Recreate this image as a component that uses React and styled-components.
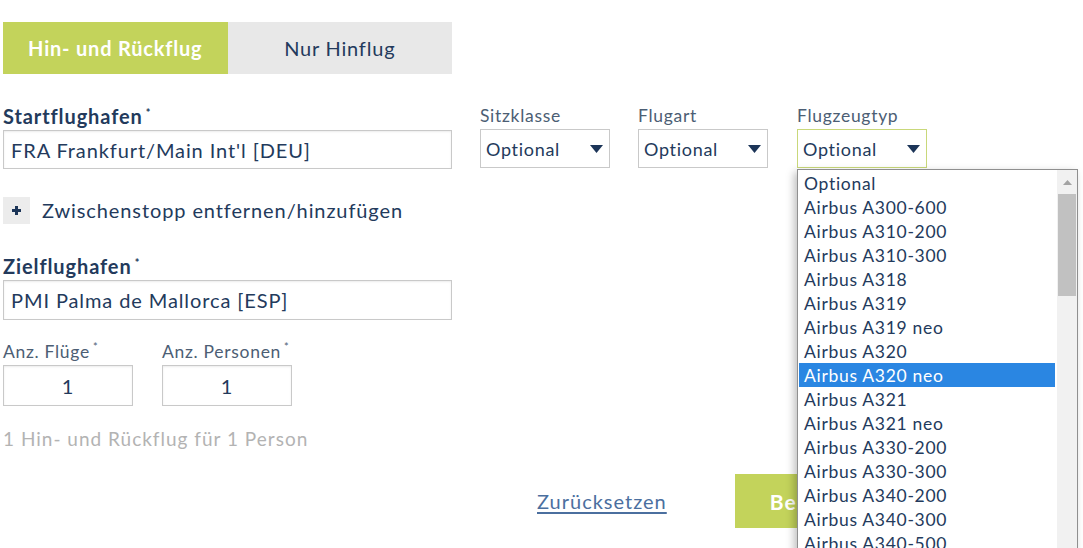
import React from "react";
import styled, { createGlobalStyle } from "styled-components";

const colors = {
  navy: "#233a5c",
  label: "#4c5e74",
  green: "#c3d35b",
  grey: "#e8e8e8",
  border: "#c9c9c9",
  muted: "#b3b3b3",
  link: "#4b6f9f",
  highlight: "#2a86e2",
};

const aircraft = [
  "Optional",
  "Airbus A300-600",
  "Airbus A310-200",
  "Airbus A310-300",
  "Airbus A318",
  "Airbus A319",
  "Airbus A319 neo",
  "Airbus A320",
  "Airbus A320 neo",
  "Airbus A321",
  "Airbus A321 neo",
  "Airbus A330-200",
  "Airbus A330-300",
  "Airbus A340-200",
  "Airbus A340-300",
  "Airbus A340-500",
  "Airbus A340-600",
];

const GlobalStyle = createGlobalStyle`
  html, body {
    margin: 0;
    background: #fff;
    overflow: hidden;
  }
  body {
    font-family: Lato, "Open Sans", sans-serif;
    color: ${colors.navy};
  }
`;

const Page = styled.div`
  padding: 22px 0 0 3px;
  width: 1080px;
  height: 548px;
  box-sizing: border-box;
`;

const Toggle = styled.div`
  display: flex;
  width: 449px;
  height: 52px;
`;

const ToggleOption = styled.div`
  flex: 1;
  display: flex;
  align-items: center;
  justify-content: center;
  font-size: 20px;
  letter-spacing: 0.8px;
  font-weight: ${(p) => (p.active ? 700 : 400)};
  background: ${(p) => (p.active ? colors.green : colors.grey)};
  color: ${(p) => (p.active ? "#fff" : colors.navy)};
`;

const Row = styled.div`
  display: flex;
  align-items: flex-start;
  gap: ${(p) => p.gap || 28}px;
  margin-top: ${(p) => p.top || 0}px;
`;

const Field = styled.div`
  position: relative;
  display: flex;
  flex-direction: column;
  width: ${(p) => p.width}px;
`;

const Label = styled.div`
  font-size: ${(p) => (p.small ? 17.5 : 20)}px;
  letter-spacing: ${(p) => (p.small ? 0.7 : 0.9)}px;
  font-weight: ${(p) => (p.strong ? 700 : 400)};
  color: ${(p) => (p.small ? colors.label : colors.navy)};
  line-height: 20px;
  height: 20px;
  margin-bottom: ${(p) => (p.small ? 3 : 4)}px;
  white-space: nowrap;
`;

const Star = styled.sup`
  font-size: 11px;
  margin-left: 3px;
  vertical-align: 7px;
  line-height: 0;
`;

const TextBox = styled.div`
  height: ${(p) => p.height || 39}px;
  box-sizing: border-box;
  border: 1px solid ${colors.border};
  box-shadow: inset 0 1px 2px rgba(0, 0, 0, 0.08);
  display: flex;
  align-items: center;
  justify-content: ${(p) => (p.center ? "center" : "flex-start")};
  padding: 0 7px;
  font-size: 20px;
  letter-spacing: 0.9px;
  color: ${colors.navy};
  background: #fff;
  white-space: nowrap;
`;

const SelectBox = styled.div`
  height: 39px;
  box-sizing: border-box;
  border: 1px solid ${(p) => (p.open ? "#c9d87a" : colors.border)};
  display: flex;
  align-items: center;
  justify-content: space-between;
  padding: 0 6px 0 5px;
  font-size: 18px;
  letter-spacing: 0.7px;
  color: ${colors.navy};
  background: #fff;
`;

const Caret = () => (
  <svg width="13" height="8" viewBox="0 0 13 8">
    <path d="M0 0 H13 L6.5 8 Z" fill="#1c3558" />
  </svg>
);

const Dropdown = styled.ul`
  position: absolute;
  top: 63px;
  left: 0;
  width: 281px;
  height: 400px;
  margin: 0;
  padding: 1px 22px 0 1px;
  list-style: none;
  box-sizing: border-box;
  background: #fff;
  border: 1px solid #8f8f8f;
  box-shadow: -3px 3px 8px rgba(0, 0, 0, 0.25);
  z-index: 5;
  overflow: hidden;
`;

const Option = styled.li`
  height: 24px;
  line-height: 25px;
  padding-left: 5px;
  font-size: 17.5px;
  letter-spacing: 0.7px;
  white-space: nowrap;
  background: ${(p) => (p.selected ? colors.highlight : "transparent")};
  color: ${(p) => (p.selected ? "#fff" : colors.navy)};
`;

const Scrollbar = styled.div`
  position: absolute;
  top: 0;
  right: 0;
  width: 20px;
  height: 100%;
  background: #f1f1f1;
  display: flex;
  flex-direction: column;
  align-items: center;
`;

const ScrollArrow = styled.div`
  height: 24px;
  display: flex;
  align-items: center;
  justify-content: center;
`;

const Thumb = styled.div`
  width: 18px;
  height: 102px;
  background: #c1c1c1;
`;

const Stopover = styled.div`
  display: flex;
  align-items: center;
  gap: 12px;
  margin-top: 28px;
  font-size: 20px;
  letter-spacing: 0.9px;
  line-height: 27px;
  color: ${colors.navy};
`;

const PlusBox = styled.div`
  width: 27px;
  height: 27px;
  background: #ececec;
  display: flex;
  align-items: center;
  justify-content: center;
`;

const Summary = styled.div`
  margin-top: 23px;
  font-size: 19px;
  letter-spacing: 1px;
  line-height: 20px;
  color: ${colors.muted};
`;

const Actions = styled.div`
  display: flex;
  align-items: center;
  gap: 68px;
  margin-top: 25px;
  padding-left: 534px;
`;

const ResetLink = styled.a`
  font-size: 20px;
  letter-spacing: 1px;
  color: ${colors.link};
  text-decoration: underline;
  text-underline-offset: 3px;
`;

const SubmitButton = styled.button`
  width: 210px;
  height: 54px;
  border: none;
  background: ${colors.green};
  color: #fff;
  font-family: inherit;
  font-size: 21px;
  letter-spacing: 1px;
  font-weight: 700;
  text-align: left;
  padding-left: 35px;
`;

export default function App() {
  return (
    <>
      <GlobalStyle />
      <Page>
        <Toggle>
          <ToggleOption active>Hin- und Rückflug</ToggleOption>
          <ToggleOption>Nur Hinflug</ToggleOption>
        </Toggle>

        <Row top={32} gap={28}>
          <Field width={449}>
            <Label strong>
              Startflughafen<Star>*</Star>
            </Label>
            <TextBox>FRA Frankfurt/Main Int'l [DEU]</TextBox>
          </Field>
          <Row gap={28}>
            <Field width={130}>
              <Label small>Sitzklasse</Label>
              <SelectBox>
                Optional <Caret />
              </SelectBox>
            </Field>
            <Field width={130}>
              <Label small>Flugart</Label>
              <SelectBox>
                Optional <Caret />
              </SelectBox>
            </Field>
            <Field width={130} style={{ marginLeft: 1 }}>
              <Label small>Flugzeugtyp</Label>
              <SelectBox open>
                Optional <Caret />
              </SelectBox>
              <Dropdown>
                {aircraft.map((name, i) => (
                  <Option key={name} selected={i === 8}>
                    {name}
                  </Option>
                ))}
                <Scrollbar>
                  <ScrollArrow>
                    <svg width="9" height="5" viewBox="0 0 9 5">
                      <path d="M0 5 L4.5 0 L9 5 Z" fill="#a3a3a3" />
                    </svg>
                  </ScrollArrow>
                  <Thumb />
                </Scrollbar>
              </Dropdown>
            </Field>
          </Row>
        </Row>

        <Stopover>
          <PlusBox>
            <svg width="9" height="9" viewBox="0 0 9 9">
              <path d="M3 0 H6 V3 H9 V6 H6 V9 H3 V6 H0 V3 H3 Z" fill="#1c3558" />
            </svg>
          </PlusBox>
          Zwischenstopp entfernen/hinzufügen
        </Stopover>

        <Row top={32}>
          <Field width={449}>
            <Label strong>
              Zielflughafen<Star>*</Star>
            </Label>
            <TextBox height={40}>PMI Palma de Mallorca [ESP]</TextBox>
          </Field>
        </Row>

        <Row top={22} gap={29}>
          <Field width={130}>
            <Label small>
              Anz. Flüge<Star>*</Star>
            </Label>
            <TextBox height={41} center>1</TextBox>
          </Field>
          <Field width={130}>
            <Label small>
              Anz. Personen<Star>*</Star>
            </Label>
            <TextBox height={41} center>1</TextBox>
          </Field>
        </Row>

        <Summary>1 Hin- und Rückflug für 1 Person</Summary>

        <Actions>
          <ResetLink>Zurücksetzen</ResetLink>
          <SubmitButton>Berechnen</SubmitButton>
        </Actions>
      </Page>
    </>
  );
}
